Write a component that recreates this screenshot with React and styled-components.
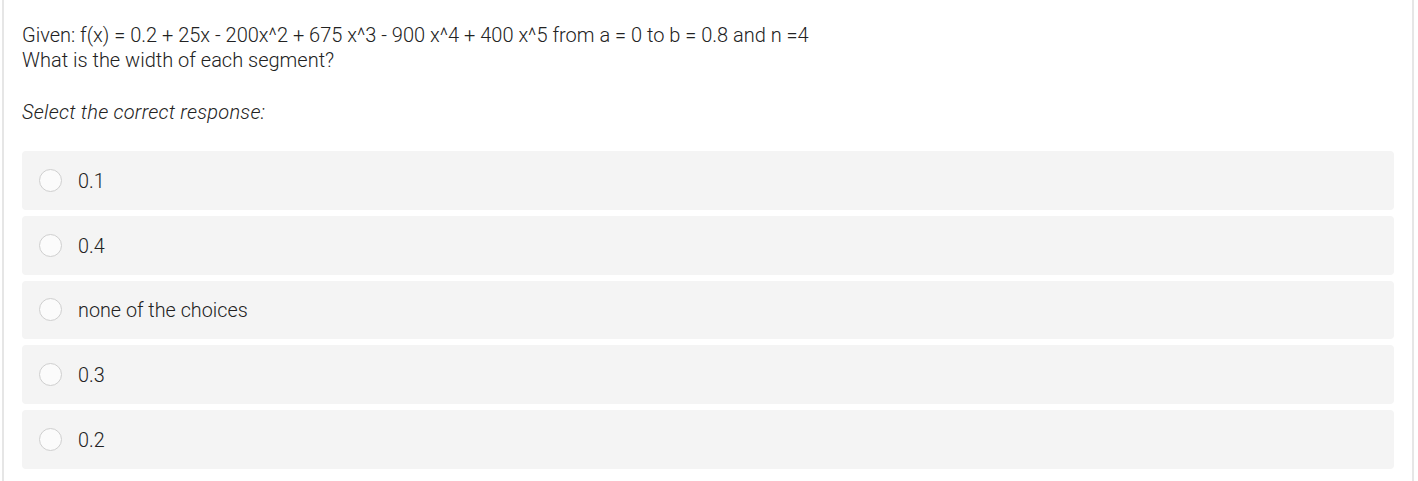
import React from "react";
import styled, { createGlobalStyle } from "styled-components";

const Global = createGlobalStyle`
  html, body { margin: 0; padding: 0; background: #fff; }
  body { font-family: Roboto, "Liberation Sans", sans-serif; }
`;

const Frame = styled.div`
  margin-left: 2px;
  width: 1412px;
  height: 481px;
  box-sizing: border-box;
  border-left: 2px solid #e6e6e6;
  border-right: 2px solid #e6e6e6;
  padding: 23px 18px 0 18px;
`;

const Question = styled.div`
  font-size: 20px;
  font-weight: 300;
  line-height: 25px;
  color: #222;
`;

const Prompt = styled.div`
  margin-top: 27px;
  font-size: 20px;
  font-weight: 300;
  font-style: italic;
  letter-spacing: 0.25px;
  line-height: 25px;
  color: #222;
`;

const Options = styled.div`
  margin-top: 26px;
  display: flex;
  flex-direction: column;
  gap: 6px;
`;

const Option = styled.label`
  display: flex;
  align-items: center;
  height: 58.75px;
  box-sizing: border-box;
  padding-left: 17px;
  background: #f4f4f4;
  border-radius: 4px;
  cursor: pointer;
`;

const Radio = styled.span`
  width: 23px;
  height: 23px;
  box-sizing: border-box;
  border-radius: 50%;
  border: 1px solid #cfcfcf;
  background: #fbfbfb;
  flex-shrink: 0;
`;

const OptionText = styled.span`
  margin-left: 16px;
  padding-top: 2px;
  font-size: 19.8px;
  font-weight: 300;
  color: #222;
`;

const choices = ["0.1", "0.4", "none of the choices", "0.3", "0.2"];

export default function App() {
  return (
    <>
      <Global />
      <Frame>
        <Question>
          Given: f(x) = 0.2 + 25x - 200x^2 + 675 x^3 - 900 x^4 + 400 x^5 from a = 0 to b = 0.8 and n =4
          <br />
          What is the width of each segment?
        </Question>
        <Prompt>Select the correct response:</Prompt>
        <Options>
          {choices.map((c) => (
            <Option key={c}>
              <Radio />
              <OptionText>{c}</OptionText>
            </Option>
          ))}
        </Options>
      </Frame>
    </>
  );
}
